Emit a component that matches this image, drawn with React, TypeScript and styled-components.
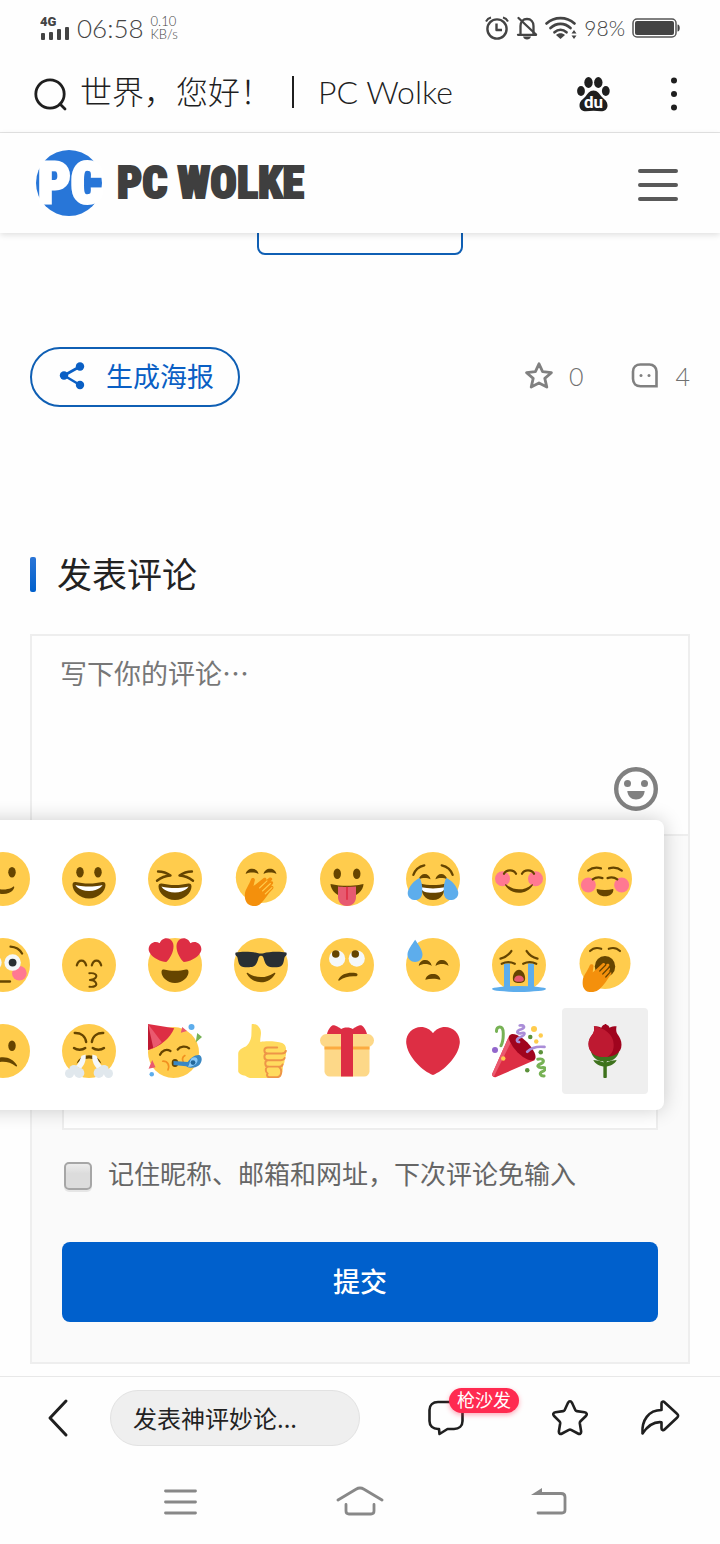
import React from "react";
import styled, { createGlobalStyle } from "styled-components";

const GlobalStyle = createGlobalStyle`
  *, *::before, *::after { box-sizing: border-box; }
  body {
    margin: 0;
    background: #fefefe;
    color: #222;
    font-family: Lato, "Noto Sans CJK SC", sans-serif;
    font-weight: 300;
  }
  button, input, textarea { font: inherit; color: inherit; }
  button { border: 0; padding: 0; background: none; cursor: pointer; }
  svg { display: block; flex: none; }
`;

const Page = styled.div`
  display: flex;
  flex-direction: column;
  min-height: 100vh;
  overflow-x: clip;
`;

/* ---------- phone status bar ---------- */

const StatusBar = styled.div`
  display: flex;
  align-items: center;
  justify-content: space-between;
  height: 55px;
  padding: 0 40px;
  color: #444;
`;

const StatusGroup = styled.div`
  display: flex;
  align-items: center;
  gap: 7px;
`;

const Clock = styled.time`
  font-size: 26px;
  line-height: 32px;
`;

const NetSpeed = styled.div`
  font-size: 13px;
  line-height: 13px;
`;

const BatteryText = styled.span`
  font-size: 21px;
  line-height: 24px;
`;

/* ---------- browser bar ---------- */

const BrowserBar = styled.div`
  display: flex;
  align-items: center;
  height: 78px;
  padding: 0 40px 0 34px;
  border-bottom: 1px solid #e4e4e4;
  color: #1f1f1f;
`;

const PageTitle = styled.div`
  display: flex;
  flex: 1;
  align-items: center;
  margin-left: 12px;
  padding-bottom: 3px;
  font-size: 32px;
  line-height: 40px;
  white-space: nowrap;
`;

const TitleRule = styled.span`
  width: 2px;
  height: 32px;
  margin: 0 24px 0 20px;
  background: #1f1f1f;
`;

const BarButton = styled.button`
  display: flex;
  margin-left: 58px;
`;

/* ---------- site header ---------- */

const SiteHeader = styled.header`
  position: relative;
  z-index: 1;
  display: flex;
  align-items: center;
  justify-content: space-between;
  height: 100px;
  padding: 0 42px 0 34px;
  background: #fefefe;
  box-shadow: 0 2px 6px rgba(0, 0, 0, 0.12);
`;

const Brand = styled.a`
  display: flex;
  align-items: center;
  gap: 11px;
  color: #3f3f3f;
  text-decoration: none;
`;

const BrandName = styled.span`
  font-family: "Roboto Condensed", Roboto, sans-serif;
  font-size: 44px;
  font-weight: 900;
  line-height: 48px;
  white-space: nowrap;
  -webkit-text-stroke: 2px #3f3f3f;
`;

/* ---------- article foot ---------- */

const Main = styled.main`
  flex: 1;
  padding: 0 30px 12px;
`;

const ScrolledEdge = styled.div`
  display: flex;
  align-items: flex-end;
  justify-content: center;
  height: 22px;
  overflow: hidden;
`;

const OutlineButton = styled.button`
  flex: none;
  width: 206px;
  height: 72px;
  border: 2px solid #0f5fb4;
  border-radius: 8px;
`;

const MetaRow = styled.div`
  display: flex;
  align-items: center;
  justify-content: space-between;
  margin-top: 92px;
`;

const PosterButton = styled.button`
  display: flex;
  align-items: center;
  gap: 20px;
  height: 60px;
  padding: 0 24px 0 26px;
  border: 2px solid #0f5fb4;
  border-radius: 30px;
  color: #0a5fc4;
  font-size: 27px;
  font-weight: 400;
  line-height: 36px;
`;

const Counts = styled.div`
  display: flex;
  gap: 48px;
  padding-bottom: 3px;
`;

const CountButton = styled.button`
  display: flex;
  align-items: center;
  gap: 16px;
  color: #707070;
  font-size: 25px;
  line-height: 36px;
`;

const SectionTitle = styled.h2`
  display: flex;
  align-items: center;
  gap: 21px;
  height: 35px;
  margin: 150px 0 42px;
  font-size: 35px;
  font-weight: 400;
  line-height: 35px;

  &::before {
    content: "";
    width: 6px;
    height: 35px;
    border-radius: 2px;
    background: linear-gradient(#2b75d6, #0060cc);
  }
`;

/* ---------- comment form ---------- */

const CommentForm = styled.form`
  position: relative;
  border: 2px solid #eee;
`;

const Editor = styled.div`
  position: relative;
  border-bottom: 2px solid #eee;
`;

const CommentBox = styled.textarea`
  display: block;
  width: 100%;
  height: 198px;
  padding: 18px 28px;
  border: 0;
  outline: 0;
  background: transparent;
  resize: none;
  font-family: "Noto Sans CJK SC", sans-serif;
  font-size: 27px;
  font-weight: 400;
  line-height: 38px;

  &::placeholder { color: #777; opacity: 1; }
`;

const EmojiToggle = styled.button`
  position: absolute;
  right: 30px;
  bottom: 23px;
`;

const Details = styled.div`
  padding: 30px 30px 40px;
  background: #fafafa;
`;

const Fields = styled.div`
  display: grid;
  gap: 24px;
`;

const Field = styled.input`
  width: 100%;
  height: 72px;
  padding: 0 24px;
  border: 2px solid #eee;
  background: #fff;
  font-size: 26px;
`;

const Remember = styled.label`
  display: flex;
  align-items: center;
  gap: 16px;
  height: 88px;
  margin-bottom: 24px;
  padding-left: 2px;
  color: #666;
  font-size: 26px;
  font-weight: 400;
  line-height: 36px;
`;

const Tick = styled.input`
  appearance: none;
  flex: none;
  width: 28px;
  height: 28px;
  margin: 4px 0 0;
  border: 2px solid #a6a6a6;
  border-radius: 5px;
  background: linear-gradient(#ececec, #dcdcdc 40%);
  box-shadow: 0 2px 0 #e6e6e6;
`;

const Submit = styled.button`
  width: 100%;
  height: 80px;
  padding-bottom: 4px;
  border-radius: 8px;
  background: #0060cc;
  color: #fff;
  font-size: 27px;
  font-weight: 500;
`;

const EmojiPicker = styled.div`
  position: absolute;
  top: 184px;
  right: 24px;
  display: grid;
  grid-template-columns: repeat(8, 86px);
  padding: 16px;
  border-radius: 8px;
  background: #fff;
  box-shadow: 0 0 20px rgba(0, 0, 0, 0.2);
`;

const EmojiCell = styled.button<{ $active?: boolean }>`
  display: flex;
  align-items: center;
  justify-content: center;
  height: 86px;
  border-radius: 4px;
  background: ${(p) => (p.$active ? "#efefef" : "transparent")};
`;

/* ---------- bottom bars ---------- */

const ActionBar = styled.footer`
  display: flex;
  align-items: center;
  height: 84px;
  padding: 0 40px 1px 46px;
  border-top: 1px solid #e8e8e8;
  background: #fefefe;
  color: #1f1f1f;
`;

const ReplyInput = styled.input`
  flex: 0 1 250px;
  min-width: 0;
  height: 56px;
  margin: 0 68px 0 40px;
  padding: 0 22px 2px;
  border: 1px solid #e2e2e2;
  border-radius: 28px;
  outline: 0;
  background: #efefef;
  font-family: "Noto Sans CJK SC", sans-serif;
  font-size: 24px;
  font-weight: 400;

  &::placeholder { color: #222; opacity: 1; }
`;

const Actions = styled.div`
  display: flex;
  flex: 1;
  justify-content: space-between;
`;

const ActionButton = styled.button<{ $width: number }>`
  position: relative;
  width: ${(p) => p.$width}px;
`;

const Badge = styled.span`
  position: absolute;
  top: -11px;
  left: 21px;
  height: 25px;
  padding: 0 8px;
  border-radius: 13px;
  background: #ff2a50;
  box-shadow: 0 2px 5px rgba(255, 42, 80, 0.4);
  color: #fff;
  font-size: 18px;
  font-weight: 400;
  line-height: 24px;
  white-space: nowrap;
`;

const SystemNav = styled.nav`
  display: grid;
  grid-template-columns: 1fr auto 1fr;
  align-items: center;
  height: 84px;
  padding: 0 152px;
  color: #888;
`;

const NavButton = styled.button`
  justify-self: start;
  &:last-child { justify-self: end; }
`;

/* ---------- emoji drawings, 36 units square ---------- */

const BROWN = "#664500";
const stroke = (width: number, color = BROWN) => ({
  fill: "none",
  stroke: color,
  strokeWidth: width,
  strokeLinecap: "round" as const,
  strokeLinejoin: "round" as const,
});

const Face = () => <circle cx="18" cy="18" r="18" fill="#FFCC4D" />;

const Eyes = ({ y = 13.5, dx = 6 }: { y?: number; dx?: number }) => (
  <g fill={BROWN}>
    <ellipse cx={18 - dx} cy={y} rx="2.5" ry="3.5" />
    <ellipse cx={18 + dx} cy={y} rx="2.5" ry="3.5" />
  </g>
);

const Grin = () => (
  <>
    <path fill={BROWN} d="M18 21c-3.623 0-6.027-.422-9-1-.679-.131-2 0-2 2 0 4 4.595 9 11 9 6.404 0 11-5 11-9 0-2-1.321-2.132-2-2-2.973.578-5.377 1-9 1z" />
    <path fill="#FFF" d="M9 22s3 1 9 1 9-1 9-1-2 4-9 4-9-4-9-4z" />
  </>
);

const Hand = () => (
  <g>
    <path
      fill="#F4900C"
      d="M7.3 27.5c.2-2.300 2.900-6 4-9.200.5-1.500 2.900-1 2.600.6l-.9 3.800 6.800-5.300c1.200-.9 2.500.5 1.500 1.500l2.200-1.700c1.300-.9 2.700.6 1.600 1.700l-.9.900c1.400-.8 2.600.6 1.500 1.700l-1 1.100c1.300-.4 2.200 1 1.200 2-3.500 3.400-5.200 7-8.400 10.100-2.500 2.300-7.500 1.600-9.200-1.200-1.200-2-1.200-4-1-6z"
    />
    <path {...stroke(0.7, "#FFCC4D")} d="m17 24 5-4.800M19 26l5.300-5M20.800 28l4.500-4.300" />
  </g>
);

const EMOJI: { name: string; art: React.ReactNode }[] = [
  {
    name: "微笑",
    art: (
      <>
        <Face />
        <Eyes />
        <path fill={BROWN} d="M10.515 23.621C10.56 23.8 11.683 28 18 28c6.318 0 7.440-4.200 7.485-4.379.055-.217-.043-.442-.237-.554-.195-.111-.439-.078-.6.077C24.629 23.163 22.694 25 18 25s-6.630-1.837-6.648-1.855C11.256 23.050 11.128 23 11 23c-.084 0-.169.021-.246.064-.196.112-.294.339-.239.557z" />
      </>
    ),
  },
  { name: "大笑", art: <><Face /><Eyes /><Grin /></> },
  {
    name: "眯眼笑",
    art: (
      <>
        <Face />
        <path {...stroke(1.6)} d="M6.700 13c3 0 6 1 8.300 2.700-3.300.2-6.500 1.500-9 3.500M29.300 13c-3 0-6 1-8.300 2.700 3.300.2 6.500 1.500 9 3.500" />
        <g transform="translate(0 1)"><Grin /></g>
      </>
    ),
  },
  {
    name: "捂嘴笑",
    art: (
      <>
        <circle cx="18.200" cy="17" r="17" fill="#FFCC4D" />
        <path fill={BROWN} d="M7.800 14.600c.4-2.200 2.200-3.500 4.300-3.500s3.900 1.300 4.300 3.500c-2.600-1.300-6-1.300-8.600 0zM19.700 14.600c.4-2.200 2.200-3.500 4.300-3.500s3.900 1.300 4.300 3.500c-2.600-1.300-6-1.300-8.600 0z" />
        <Hand />
      </>
    ),
  },
  {
    name: "吐舌",
    art: (
      <>
        <Face />
        <Eyes y={14.500} dx={6.500} />
        <path fill={BROWN} d="M7 21.263c0 3.964 4.596 9 11 9s11-5 11-9c0 0-10.333 2.756-22 0z" />
        <path fill="#E75A70" d="M12 23.003v6.961c0 3 2 6 6 6s6-3 6-6v-6.920c-6.291.6-12-.041-12-.041z" />
        <path {...stroke(1.100, "#DD2E44")} d="M18 23.500v8" />
      </>
    ),
  },
  {
    name: "笑哭",
    art: (
      <>
        <Face />
        <path fill={BROWN} d="M18 22c-3 0-6-.4-8-.9 0 6 2 10.900 8 10.900s8-4.900 8-10.900c-2 .5-5 .9-8 .9z" />
        <path fill="#FFF" d="M10 23.500c5 1 11 1 16 0-.5 3-3 3.700-8 3.700s-7.500-.7-8-3.700z" />
        <path fill={BROWN} d="M8.500 18.200c.6-2.300 2.200-3.600 4-3.600s3.400 1.300 3.900 3.600c-2.300-1.200-5.500-1.200-7.900 0zM19.600 18.200c.5-2.300 2.100-3.600 3.900-3.600s3.400 1.300 4 3.600c-2.400-1.200-5.600-1.200-7.900 0z" />
        <path {...stroke(1.500)} d="M4.900 15.300c1-3 3.600-5.600 7.300-6.400M31.100 15.300c-1-3-3.600-5.600-7.300-6.400" />
        <path fill="#5DADEC" d="M9.200 17.300C11 21 11 25 10.700 28c-.3 2.800-2.500 4.200-5.200 4-2.800-.2-4.700-2.600-4.300-5.300.5-3.200 4.200-8 8-9.400zM26.800 17.300C25 21 25 25 25.300 28c.3 2.800 2.500 4.200 5.200 4 2.800-.2 4.700-2.600 4.300-5.300-.5-3.200-4.200-8-8-9.400z" />
      </>
    ),
  },
  {
    name: "害羞",
    art: (
      <>
        <Face />
        <circle cx="7" cy="17.800" r="5" fill="#FF7892" />
        <circle cx="29" cy="17.800" r="5" fill="#FF7892" />
        <path {...stroke(1.500)} d="M8 14.500c1.500-2.900 6.500-2.900 8 0M20 14.500c1.500-2.900 6.500-2.900 8 0" />
        <path fill={BROWN} d="M8.800 22.200c-.4-.7.100-1 .7-.6 5 4.400 12 4.400 17 0 .6-.4 1.100-.1.700.6-2 3.300-5.400 5-9.200 5s-7.200-1.700-9.200-5z" />
      </>
    ),
  },
  {
    name: "开心",
    art: (
      <>
        <Face />
        <circle cx="6.900" cy="22" r="5" fill="#FF7892" />
        <circle cx="29.100" cy="22" r="5" fill="#FF7892" />
        <path {...stroke(1.500)} d="M6.800 12.400c2.200-1.700 5.500-2.300 8.500-1.500M29.200 12.400c-2.200-1.700-5.500-2.300-8.500-1.500M9.800 18.200c1.800-1.300 4.400-1.500 6.500-.8M26.200 18.200c-1.800-1.300-4.400-1.500-6.500-.8" />
        <path fill={BROWN} d="M12.500 24.600c3.600 1 7.400 1 11 0 .5 2.800-2.300 4.900-5.500 4.900s-6-2.100-5.500-4.900z" />
      </>
    ),
  },
  {
    name: "脸红",
    art: (
      <>
        <Face />
        <circle cx="7.100" cy="23.500" r="4.900" fill="#FF7892" />
        <circle cx="28.900" cy="23.500" r="4.900" fill="#FF7892" />
        <circle cx="11.600" cy="16.400" r="5.500" fill="#F5F8FA" />
        <circle cx="24.400" cy="16.400" r="5.500" fill="#F5F8FA" />
        <circle cx="11.600" cy="16.400" r="2.600" fill="#292F33" />
        <circle cx="24.400" cy="16.400" r="2.600" fill="#292F33" />
        <path {...stroke(1.500)} d="M5.300 10.300c1.500-2.600 4.500-4.300 7.700-4.500M30.700 10.300c-1.500-2.600-4.500-4.300-7.700-4.500" />
        <path {...stroke(1.800)} d="M13.500 29h9" />
      </>
    ),
  },
  {
    name: "亲亲",
    art: (
      <>
        <Face />
        <path {...stroke(1.500)} d="M9.900 18.200c1-4.200 5.200-4.200 6.200 0M19.900 18.200c1-4.200 5.200-4.200 6.200 0" />
        <path {...stroke(1.300)} d="M18.200 23.500c3.800-.4 5.500 1.200 4.300 2.900-.8 1.200-2.300 1.500-3.900 1.600 1.600.1 3.200.5 3.900 1.600 1.200 1.900-.6 3.300-4.200 2.900" />
      </>
    ),
  },
  {
    name: "花痴",
    art: (
      <>
        <Face />
        <path fill="#DD2E44" d="M16.650 3.281C15.791.85 13.126-.426 10.694.431c-1.476.52-2.521 1.711-2.928 3.104-1.191-.829-2.751-1.100-4.225-.58C1.111 3.813-.167 6.480.692 8.911c.122.344.284.663.472.958 1.951 3.582 7.588 6.100 11.001 6.131 2.637-2.167 5.446-7.665 4.718-11.677-.038-.348-.113-.698-.233-1.042zm2.700 0C20.209.85 22.875-.426 25.306.431c1.476.52 2.521 1.711 2.929 3.104 1.191-.829 2.751-1.100 4.225-.58 2.430.858 3.707 3.525 2.850 5.956-.123.344-.284.663-.473.958-1.951 3.582-7.588 6.100-11.002 6.131-2.637-2.167-5.445-7.665-4.717-11.677.037-.348.112-.698.232-1.042z" />
        <path fill={BROWN} d="M18 21.849c-2.966 0-4.935-.346-7.369-.819-.557-.106-1.638 0-1.638 1.638 0 3.275 3.763 7.369 9.007 7.369s9.007-4.094 9.007-7.369c0-1.638-1.082-1.745-1.638-1.638-2.434.473-4.402.819-7.369.819z" />
      </>
    ),
  },
  {
    name: "墨镜",
    art: (
      <>
        <Face />
        <path fill="#292F33" d="M1.200 9.700c5-1 12.300-.4 15 .4 1.200.3 2.400.3 3.600 0 2.700-.8 10-1.400 15-.4.5.5.4 1.700-.2 2.100-1 .4-1 1.500-1.300 3-.6 3.500-1.600 4.700-6.300 4.700-4.500 0-5.700-1-7-5-.4-1.500-.8-2.600-2-2.600s-1.600 1.100-2 2.600c-1.300 4-2.500 5-7 5-4.700 0-5.700-1.200-6.300-4.700-.3-1.500-.3-2.600-1.300-3-.6-.4-.7-1.600-.2-2.100z" />
        <path fill={BROWN} d="M8.500 23.800c-.3-.6.2-.9.8-.5 5.200 3.700 12.200 3.700 17.400 0 .6-.4 1.100-.1.800.5-1.800 3.300-5.400 5.700-9.500 5.700s-7.700-2.400-9.500-5.700z" />
      </>
    ),
  },
  {
    name: "白眼",
    art: (
      <>
        <Face />
        <circle cx="11.400" cy="13.700" r="5.400" fill="#F5F8FA" />
        <circle cx="24.500" cy="13.700" r="5.400" fill="#F5F8FA" />
        <circle cx="10.500" cy="10.600" r="2.500" fill={BROWN} />
        <circle cx="23.500" cy="10.600" r="2.500" fill={BROWN} />
        <path fill={BROWN} d="M12.200 27.800c2.200-4.300 7.500-5.200 12-4.300 1.300.4 1 2-.3 2-4.200-.2-7.500.2-11 2.800-.5.3-.9 0-.7-.5z" />
      </>
    ),
  },
  {
    name: "汗",
    art: (
      <>
        <Face />
        <path fill="#5DADEC" d="M11 11c0 2.800-2.100 5-4.900 5S1 13.800 1 11c0-3 3-6.600 5.100-9.800C8.200 4.400 11 8 11 11z" />
        <path fill={BROWN} d="M8.500 18.600c.5-2.600 2.300-3.900 4.300-3.900s3.800 1.300 4.400 3.900c-2.600-1.700-6.100-1.700-8.700 0zM19.700 18.600c.5-2.600 2.300-3.900 4.300-3.900s3.800 1.300 4.400 3.900c-2.600-1.700-6.100-1.700-8.700 0zM12.900 27.900c.5-2.600 2.600-3.900 5.100-3.900s4.500 1.300 5 3.900c-3-1-7.100-1-10.100 0z" />
      </>
    ),
  },
  {
    name: "大哭",
    art: (
      <>
        <Face />
        <path fill="#5DADEC" d="M8 17h4v16H8zM24 17h4v16h-4z" />
        <ellipse cx="18" cy="34" rx="18" ry="2" fill="#5DADEC" />
        <path {...stroke(1.500)} d="M5.700 13.800c3-.8 5.500-2.500 7.200-5.100M30.300 13.800c-3-.8-5.500-2.500-7.200-5.100M6.500 17.200c2.700-1.300 6-1.300 8.700 0M29.500 17.200c-2.700-1.300-6-1.300-8.700 0" />
        <path fill={BROWN} d="M18 21.200c2.400 0 4.100 3 4.100 5.600S20.500 30 18 30s-4.100-.6-4.100-3.200 1.700-5.600 4.100-5.600z" />
        <path fill="#E75A70" d="M18 25c2 0 3.200 1.300 3.200 2.600S20 29.100 18 29.100s-3.200-.2-3.200-1.500S16 25 18 25z" />
      </>
    ),
  },
  {
    name: "哈欠",
    art: (
      <>
        <circle cx="18" cy="17" r="17" fill="#FFCC4D" />
        <path {...stroke(1.400)} d="M8 8.700c2-2 5-2.400 7.500-1.500M28 8.700c-2-2-5-2.400-7.500-1.500" />
        <ellipse cx="18" cy="19" rx="6.800" ry="7" fill={BROWN} />
        <path fill="#F4900C" d="M3.200 28c.2-2.600 3.200-6 4.600-9.600.5-1.400 2.700-1 2.500.5l-.5 4.100 6.500-6c1.100-.9 2.400.4 1.500 1.500l1.400-1.100c1.200-.9 2.400.5 1.400 1.500l-.8.900c1.200-.5 2.100.6 1.300 1.700l-.7.900c1.400-.5 2.400.5 1.600 1.700-2.600 3.800-4.500 7-7.600 9.900-2.400 2.300-7.300 3-9.700.6-1.800-1.800-1.700-4.200-1.500-6.600z" />
        <path {...stroke(0.800, BROWN)} d="m14.500 22 4-4M16.500 24l4.300-4.500M18.500 26l3.200-3.600" />
      </>
    ),
  },
  {
    name: "难过",
    art: (
      <>
        <Face />
        <Eyes y={14.500} />
        <path fill={BROWN} d="M8.700 27.500c1.900-3.300 5.300-5.400 9.300-5.400s7.400 2.100 9.300 5.400c.3.600-.2 1-.8.6-5.100-3.900-11.900-3.900-17 0-.6.400-1.100 0-.8-.6z" />
      </>
    ),
  },
  {
    name: "生气",
    art: (
      <>
        <Face />
        <path {...stroke(1.600)} d="M8.500 6c4-.2 7 2 7.600 6M27.500 6c-4-.2-7 2-7.600 6M8 16c2 1.500 5.500 1.500 7.500 0M20.500 16c2 1.500 5.500 1.500 7.500 0" />
        <path fill={BROWN} d="M9.700 26.500C11 22.800 14 20.800 18 20.800s7 2 8.300 5.700c-2.300-2.100-5-3.500-8.300-3.500s-6 1.400-8.300 3.500z" />
        <path fill="#F5F8FA" d="m13 21.200 2.700-.8c.6 3.200-.7 7.200-3 9.200l-3.700-1.200c2-2 3.200-4.300 4-7.200zM23 21.200l-2.700-.8c-.6 3.200.7 7.200 3 9.200l3.700-1.200c-2-2-3.200-4.300-4-7.200z" />
        <g fill="#E1E8ED">
          <circle cx="8" cy="30.500" r="3.200" /><circle cx="5" cy="33" r="3" /><circle cx="11.500" cy="32.600" r="3.400" />
          <circle cx="28" cy="30.500" r="3.200" /><circle cx="31" cy="33" r="3" /><circle cx="24.500" cy="32.600" r="3.400" />
        </g>
      </>
    ),
  },
  {
    name: "派对",
    art: (
      <>
        <circle cx="17" cy="19" r="17" fill="#FFCC4D" />
        <path fill="#DD2E44" d="M0 0l17.500 2.800C14.500 9.500 8.500 15 0 17.300z" />
        <path fill="#EA596E" d="M0 0l9.200 12.200C6.700 14.500 3.700 16.200 1 17z" />
        <path fill="#BE1931" d="M0 0l3.500 15.900L0 17.300z" />
        <path {...stroke(1.500)} d="M8 20.500c1.200-3 4.300-4 7-2.500M19.800 17c1.700-2.300 5.500-2.500 7.600-.8" />
        <path {...stroke(1.100, "#F19020")} d="M9.800 24.800c3.400-.2 4.800 2.800 3.500 5.800M24.600 21c-1.600 1-2 2.700-1 4.500" />
        <ellipse cx="18" cy="26" rx="2.200" ry="2.700" fill={BROWN} />
        <path fill="#3B88C3" d="M17 24.700l9.500.6c1.500-2.500 5-5 7.700-4.600 2.600 1.300 1.800 5.300-.6 7.200-2.200 1.700-6 1.700-8.200.3l-8.400-.8z" />
        <path fill="#88C9F9" d="M29 22.800c2.400-1.500 4.400-.3 4 1.900-.5 2.200-3.500 4.200-6.400 3.800 1.200-1.500 1-3.700 2.400-5.700z" />
        <circle cx="30" cy="25.700" r="1.600" fill="#226699" />
        <path fill="#EA596E" d="M22.800 2l3.200 2.600-4.100 1.200zM2.800 24l2.200 4.800-4.600 1z" />
        <path fill="#77B255" d="M32.800 6l3.200 2.700-4.200 3.700z" />
        <circle cx="29" cy="2" r="2" fill="#5DADEC" /><circle cx="2.500" cy="33.500" r="1.500" fill="#5DADEC" />
      </>
    ),
  },
  {
    name: "赞",
    art: (
      <>
        <path fill="#FFDB5E" d="M11.800.2c2.300-.8 6.200 1.400 6.200 5.800 0 2-.8 4.300-.4 6 4-.8 11-.4 14.500.6 2.300 1 3.200 3.600 2.100 5.500.8 1.400.6 3.700-.7 4.900.5 1.500.2 3.500-1 4.600.3 2.300-.2 4.700-1.200 6.400-.9 1.600-2.300 2-5 2H12c-2 0-3-.3-4.500-1.500-2-.2-4.700-1.500-4.700-3V19.800c0-2.500 2.600-3.800 5.100-4.800C10 13.500 11.600 10 11.600 7z" />
        <path {...stroke(1.300, "#EE9547")} d="M28.800 15.600h-6.300c-3 0-3 4 0 4h9.300c1.500 0 2.500-.7 2.800-1.700M22.500 19.600c-3 0-3 4.500 0 4.500h8.800c1.500 0 2.300-.6 2.500-1.500M22.800 24.100c-2.600 0-2.600 4.300 0 4.300h7.400c1.300 0 2-.5 2.200-1.400M23 28.400c-2.300.2-2.300 3.600-.6 4.600-1 1.400.2 2.400 1.200 2.400h5.300c2.600 0 3.600-4.600 1.300-6.500" />
      </>
    ),
  },
  {
    name: "礼物",
    art: (
      <>
        <rect x="3" y="10" width="30" height="25" rx="3.500" fill="#FDD888" />
        <rect y="6.700" width="36" height="8.500" rx="4.200" fill="#FDD888" />
        <path fill="#FCAB40" d="M3 15h30v2H3z" />
        <path fill="#DD2E44" d="M4.700 6.700C5 4.700 7 1.500 8.500.9c.8-.4 4.500 1.300 5.700 2.500 1-1.500 6.500-1.500 7.600 0C23 2.200 26.700.5 27.500.9 29 1.500 31 4.700 31.300 6.700H22V35h-8V6.700z" />
      </>
    ),
  },
  {
    name: "爱心",
    art: (
      <path fill="#DD2E44" d="M35.885 11.833c0-5.450-4.418-9.868-9.867-9.868-3.308 0-6.227 1.633-8.018 4.129-1.791-2.496-4.710-4.129-8.017-4.129-5.450 0-9.868 4.417-9.868 9.868 0 .772.098 1.520.266 2.241C1.751 22.587 11.216 31.568 18 34.034c6.783-2.466 16.249-11.447 17.617-19.959.17-.721.268-1.469.268-2.242z" />
    ),
  },
  {
    name: "庆祝",
    art: (
      <>
        <path fill="#DD2E44" d="M11.600 7.500L.1 33.300C-.2 34.500 1.200 36 2.700 35.400L28.700 24z" />
        <path fill="#EA596E" d="M12.500 12.500L1.300 35c-.9-.4-1.400-1-1.200-1.700L10.700 9.500z" />
        <ellipse cx="20.200" cy="15.500" rx="4.600" ry="11.600" transform="rotate(-45 20.200 15.500)" fill="#A0041E" />
        <path {...stroke(2, "#77B255")} d="M3 5c-.2-4 4.500-4.500 4.500 1 0 3 .2 5.500-1.500 8.500M30.500 23.500c4-1 5 1.800 2 3-3 1-2.500 3 1.500 2.500 2.500 0 1.500 2-.5 2.800-2.500 1-1 3 1.200 2.800" />
        <path {...stroke(1.800, "#AA8DD8")} d="M18.500 1c3-.6 4 1.500 1 2.500-4 1.200-3 3.700.5 2.500 2.500-.5 2 1.500-.5 2.500-3.500 1-3.500 3.300-1.500 3.500M23.500 18.500c3-3 7-3.700 11.500-3.200" />
        <circle cx="2" cy="17.300" r="2" fill="#9266CC" />
        <g fill="#FFCC4D"><circle cx="28" cy="3.300" r="2" /><circle cx="32.500" cy="7.700" r="1.500" /><circle cx="29.500" cy="11.700" r="1.500" /><circle cx="7.500" cy="23" r="1.500" /></g>
        <g fill="#5C913B"><circle cx="25.500" cy="8.700" r="1.500" /><circle cx="32.500" cy="18.800" r="1.500" /><circle cx="23.500" cy="30.800" r="1.500" /></g>
      </>
    ),
  },
  {
    name: "玫瑰",
    art: (
      <>
        <path fill="#3E721D" d="M16.900 21h2.300v14.500c0 .7-2.300.7-2.300 0z" />
        <path fill="#3E721D" d="M8.700 18.500c1 4.500 5 6.500 9.300 6.500s8.300-2 9.300-6.500zM10.200 24c3.400.3 6.500.9 7.800 2.600 1.300-1.700 4.400-2.300 7.800-2.600-1.300 2.700-4.300 4.300-7.800 4.400-3.500-.1-6.500-1.700-7.800-4.400z" />
        <path fill="#A0041E" d="M10.600 1.500c2 0 3.700.2 4.900 1 .4-1 1.200-2 2-2 .6-.8 1.500-.3 1.700.2.800.1 1.600.8 1.800 1.800 1.300-.8 2.800-1 4.700-1-.5 2.500-.2 4 .8 5.500 1.400 2 2.500 4 2.500 6.800C29 19.300 24 22 18 22S7 19.300 7 13.300c0-2.800 1.300-4.700 2.700-6.500 1-1.500 1.300-2.800.9-5.300z" />
        <path fill="#BE1931" d="M10.600 1.500c6.400 1 13.200 5 13.200 12.300 0 3.800-1.300 6.500-4.300 8.200C12 22.500 7 19.300 7 13.300c0-2.800 1.300-4.700 2.700-6.500 1-1.500 1.300-2.800.9-5.300z" />
      </>
    ),
  },
];

/* ---------- interface icons ---------- */

const SignalIcon = () => (
  <svg width="30" height="28" viewBox="0 0 30 28" fill="#444">
    <text x="0" y="12" fontFamily="Roboto, sans-serif" fontSize="13" fontWeight="900">4G</text>
    <rect x="1" y="19" width="4" height="7" rx="1" /><rect x="9" y="18" width="4" height="8" rx="1" />
    <rect x="17" y="15" width="4" height="11" rx="1" /><rect x="25" y="13" width="4" height="13" rx="1" />
  </svg>
);

const AlarmIcon = () => (
  <svg width="24" height="24" viewBox="0 0 24 24" {...stroke(2.4, "#444")} strokeLinecap="butt">
    <circle cx="12" cy="13" r="9.600" /><path d="M11.500 7.500V14h5.500" /><path strokeWidth="2" d="M1 5.500C2 3.500 4 2 6 1.500M23 5.500c-1-2-3-3.500-5-4" />
  </svg>
);

const MutedIcon = () => (
  <svg width="22" height="24" viewBox="0 0 22 24" {...stroke(2.300, "#444")}>
    <path d="M4.500 18.500V10c0-4 2.500-7 6.500-7s6.500 3 6.500 7v8.500M2 18.800h18" />
    <path fill="#444" stroke="none" d="M7 20.500h8c-.5 2-2 3-4 3s-3.500-1-4-3z" />
    <path d="M2.500 2 20 18.500" />
  </svg>
);

const WifiIcon = () => (
  <svg width="32" height="24" viewBox="0 0 32 24" {...stroke(2.600, "#444")}>
    <path d="M1.500 7.500C9.500.3 21.500.3 29.500 7.500M5.500 12c6-5.500 14-5.500 20 0M9.500 16.300c3.700-3.300 8.300-3.300 12 0" />
    <path fill="#444" stroke="none" d="M15.500 23 11 19c2.500-2.300 6.500-2.300 9 0zM29 14l2.500 3.500h-5zM29 23l2.500-3.500h-5z" />
  </svg>
);

const BatteryIcon = () => (
  <svg width="48" height="20" viewBox="0 0 48 20">
    <rect x="1" y="1" width="43" height="18" rx="4" fill="none" stroke="#555" strokeWidth="1.500" />
    <rect x="3" y="3" width="39" height="14" rx="2" fill="#444" /><path fill="#444" d="M45.500 6.500c3 0 3 7 0 7z" />
  </svg>
);

const SearchIcon = () => (
  <svg width="34" height="34" viewBox="0 0 34 34" {...stroke(2.800, "#1f1f1f")}>
    <circle cx="16" cy="17" r="14.200" /><path d="m26 27 5 5" />
  </svg>
);

const PawIcon = () => (
  <svg width="33" height="36" viewBox="0 0 33 36" fill="#1f1f1f">
    <ellipse cx="11.500" cy="6.500" rx="4.200" ry="5.400" /><ellipse cx="21.300" cy="6.500" rx="4.200" ry="5.400" />
    <ellipse cx="4" cy="15" rx="3.900" ry="5" /><ellipse cx="28.800" cy="15" rx="3.900" ry="5" />
    <path d="M16.500 14.500c4 0 6 3.500 8 6 2.500 2.800 6 4.500 6 9 0 4-3 5.800-6.500 5.800-2.500 0-5-.5-7.500-.5s-5 .5-7.500.5c-3.500 0-6.500-1.800-6.500-5.800 0-4.500 3.500-6.200 6-9 2-2.500 4-6 8-6z" />
    <text x="16.500" y="32" textAnchor="middle" fill="#fff" fontFamily="Roboto, sans-serif" fontSize="17" fontWeight="700">du</text>
  </svg>
);

const DotsIcon = () => (
  <svg width="12" height="36" viewBox="0 0 12 36" fill="#1f1f1f">
    <circle cx="6" cy="4.500" r="3" /><circle cx="6" cy="18" r="3" /><circle cx="6" cy="31.500" r="3" />
  </svg>
);

const BrandMark = () => (
  <svg width="72" height="68" viewBox="0 0 72 68">
    <circle cx="35" cy="34" r="33" fill="#2876d8" />
    <text x="4" y="54" fill="#fff" stroke="#fff" strokeWidth="3" fontFamily="Roboto Condensed, Roboto, sans-serif" fontSize="57" fontWeight="900">PC</text>
  </svg>
);

const MenuIcon = () => (
  <svg width="40" height="36" viewBox="0 0 40 36" {...stroke(4, "#595959")}>
    <path d="M2 6h36M2 20h36M2 34h36" />
  </svg>
);

const ShareNodesIcon = () => (
  <svg width="28" height="30" viewBox="0 0 28 30" fill="#0a5fc4">
    <path {...stroke(2.600, "#0a5fc4")} d="M22 4.500 6 13.500l16 9.500" />
    <circle cx="22" cy="4.500" r="4.200" /><circle cx="6" cy="13.500" r="4.200" /><circle cx="22" cy="23" r="4.200" />
  </svg>
);

const StarIcon = () => (
  <svg width="28" height="28" viewBox="0 0 28 28" {...stroke(2.800, "#808080")}>
    <path d="m14 1.800 3.600 7.900 8.800 1-6.600 5.700 2 8.700L14 21l-7.800 4.100 2-8.700L1.600 10.700l8.800-1z" />
  </svg>
);

const BubbleIcon = () => (
  <svg width="28" height="26" viewBox="0 0 28 26" {...stroke(2.600, "#808080")} strokeLinejoin="miter">
    <path d="M9.500 1.500h9c4 0 7 3 7 7v14.800h-16c-4.500 0-7.500-3-7.500-7.500V8.500c0-4 3-7 7.500-7z" />
    <circle cx="10" cy="12.500" r="1.500" fill="#808080" stroke="none" /><circle cx="18" cy="12.500" r="1.500" fill="#808080" stroke="none" />
  </svg>
);

const SmileyIcon = () => (
  <svg width="44" height="44" viewBox="0 0 44 44" fill="#808080">
    <circle cx="22" cy="22" r="19.800" {...stroke(4.400, "#808080")} />
    <circle cx="13.500" cy="16.500" r="3.500" /><circle cx="30.500" cy="16.500" r="3.500" />
    <path d="M13.300 24h17.400c-.4 5-4 8.500-8.700 8.500s-8.300-3.500-8.700-8.500z" />
  </svg>
);

const BackIcon = () => (
  <svg width="24" height="40" viewBox="0 0 24 40" {...stroke(3, "#1f1f1f")}><path d="M20 3 4 20l16 17" /></svg>
);

const ReplyIcon = () => (
  <svg width="36" height="38" viewBox="0 0 36 38" {...stroke(2.600, "#1f1f1f")}>
    <path d="M10 3h16c5 0 8.500 3 8.500 8v11c0 5-3.500 8-8.500 8h-6.500L11.500 35l-.5-5h-1c-5 0-8.500-3-8.500-8V11c0-5 3.500-8 8.500-8z" />
  </svg>
);

const RoundStarIcon = () => (
  <svg width="36" height="38" viewBox="0 0 36 38" {...stroke(2.600, "#1f1f1f")}>
    <path d="M16 3.800c1-2 3-2 4 0l3.300 7.200c.3.700.8 1 1.500 1.100l7.800 1.100c2.200.4 2.800 2.300 1.300 3.800l-5.400 5.300c-.6.6-.8 1.100-.7 1.900l1.300 8c.3 2.300-1.300 3.300-3.200 2.300l-6.800-3.600c-.8-.4-1.400-.4-2.200 0l-6.800 3.600c-1.900 1-3.500 0-3.200-2.300l1.300-8c.1-.8-.1-1.300-.7-1.900L2.100 17C.6 15.500 1.200 13.600 3.400 13.200l7.800-1.100c.7-.1 1.200-.4 1.500-1.100z" />
  </svg>
);

const ForwardIcon = () => (
  <svg width="40" height="38" viewBox="0 0 40 38" {...stroke(2.600, "#1f1f1f")}>
    <path d="M21.500 11V4.500c0-2 1.700-2.500 3-1.300l12.500 11.500c1.500 1.300 1.500 2.700 0 4L24.500 30.500c-1.300 1.200-3 .7-3-1.300v-6c-8-.8-14 3.800-19 11.300C1.500 21.500 8.500 11 21.500 11z" />
  </svg>
);

export default function App() {
  return (
    <Page>
      <GlobalStyle />
      <StatusBar>
        <StatusGroup>
          <SignalIcon />
          <Clock>06:58</Clock>
          <NetSpeed>0.10<br />KB/s</NetSpeed>
        </StatusGroup>
        <StatusGroup>
          <AlarmIcon />
          <MutedIcon />
          <WifiIcon />
          <BatteryText>98%</BatteryText>
          <BatteryIcon />
        </StatusGroup>
      </StatusBar>

      <BrowserBar>
        <SearchIcon />
        <PageTitle>
          世界，您好！<TitleRule />PC Wolke
        </PageTitle>
        <BarButton type="button" aria-label="百度"><PawIcon /></BarButton>
        <BarButton type="button" aria-label="更多"><DotsIcon /></BarButton>
      </BrowserBar>

      <SiteHeader>
        <Brand href="#">
          <BrandMark />
          <BrandName>PC WOLKE</BrandName>
        </Brand>
        <button type="button" aria-label="菜单"><MenuIcon /></button>
      </SiteHeader>

      <Main>
        <ScrolledEdge>
          <OutlineButton type="button" aria-label="打赏" />
        </ScrolledEdge>

        <MetaRow>
          <PosterButton type="button"><ShareNodesIcon />生成海报</PosterButton>
          <Counts>
            <CountButton type="button" aria-label="收藏"><StarIcon />0</CountButton>
            <CountButton type="button" aria-label="评论"><BubbleIcon />4</CountButton>
          </Counts>
        </MetaRow>

        <SectionTitle>发表评论</SectionTitle>

        <CommentForm onSubmit={(e) => e.preventDefault()}>
          <Editor>
            <CommentBox aria-label="评论" placeholder="写下你的评论…" />
            <EmojiToggle type="button" aria-label="表情"><SmileyIcon /></EmojiToggle>
          </Editor>
          <Details>
            <Fields>
              <Field aria-label="昵称" />
              <Field type="email" aria-label="邮箱" />
              <Field type="url" aria-label="网址" />
            </Fields>
            <Remember>
              <Tick type="checkbox" />
              记住昵称、邮箱和网址，下次评论免输入
            </Remember>
            <Submit type="submit">提交</Submit>
          </Details>
          <EmojiPicker>
            {EMOJI.map((item, i) => (
              <EmojiCell key={item.name} type="button" aria-label={item.name} $active={i === EMOJI.length - 1}>
                <svg width="54" height="54" viewBox="0 0 36 36">{item.art}</svg>
              </EmojiCell>
            ))}
          </EmojiPicker>
        </CommentForm>
      </Main>

      <ActionBar>
        <button type="button" aria-label="返回"><BackIcon /></button>
        <ReplyInput aria-label="发表评论" placeholder="发表神评妙论..." />
        <Actions>
          <ActionButton type="button" $width={72}><ReplyIcon /><Badge>枪沙发</Badge></ActionButton>
          <ActionButton type="button" aria-label="收藏" $width={36}><RoundStarIcon /></ActionButton>
          <ActionButton type="button" aria-label="分享" $width={40}><ForwardIcon /></ActionButton>
        </Actions>
      </ActionBar>

      <SystemNav>
        <NavButton type="button" aria-label="最近任务">
          <svg width="48" height="32" viewBox="0 0 48 32" {...stroke(2.800, "#888")}><path d="M13.500 5h30M13.500 16h30M13.500 27h30" /></svg>
        </NavButton>
        <NavButton type="button" aria-label="主屏幕">
          <svg width="48" height="32" viewBox="0 0 48 32" {...stroke(2.800, "#888")}><path d="M2 14 20 3.200c2.500-1.500 5.500-1.500 8 0L46 14M10 18.500V25c0 2 1 3 3 3h22c2 0 3-1 3-3v-6.500" /></svg>
        </NavButton>
        <NavButton type="button" aria-label="后退">
          <svg width="48" height="32" viewBox="0 0 48 32" {...stroke(2.800, "#888")}><path d="M20 7.500h21c2.500 0 4 1 4 3.500v13c0 2-1 3-3 3H18" /><path fill="#888" stroke="none" d="M11 9 22 2v7z" /></svg>
        </NavButton>
      </SystemNav>
    </Page>
  );
}
